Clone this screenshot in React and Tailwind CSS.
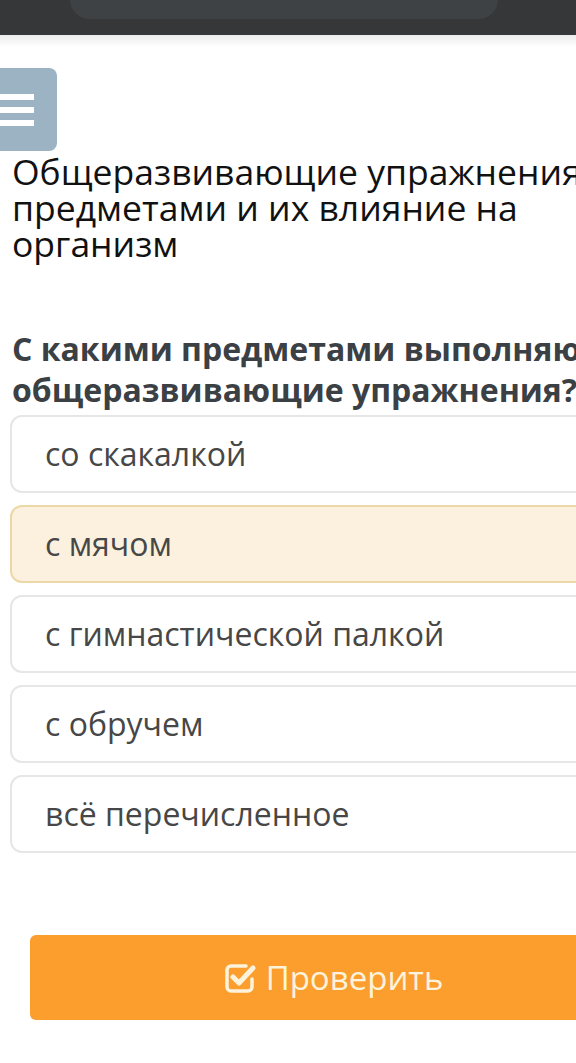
export default function App() {
  const options = [
    { t: "со скакалкой", sel: false },
    { t: "с мячом", sel: true },
    { t: "с гимнастической палкой", sel: false },
    { t: "с обручем", sel: false },
    { t: "всё перечисленное", sel: false },
  ];
  return (
    <div className="w-[576px] h-[1063px] overflow-hidden bg-white" style={{ fontFamily: '"Open Sans", "Noto Sans", sans-serif' }}>
      <div className="w-[668px]">
        {/* top bar */}
        <div className="h-[35px] bg-[#363739] relative">
          <div className="absolute left-[70px] top-[-20px] w-[428px] h-[39px] rounded-[20px] bg-[#3e4244]" />
        </div>
        <div className="h-[12px] bg-gradient-to-b from-[#ececec] to-white" />
        {/* menu button */}
        <div className="mt-[21px] flex">
          <div className="w-[57px] h-[83px] bg-[#9cb3c3] rounded-r-[8px] flex flex-col justify-center gap-[7px] items-end pr-[23px]">
            <div className="w-[34px] h-[6px] bg-white" />
            <div className="w-[34px] h-[6px] bg-white" />
            <div className="w-[34px] h-[6px] bg-white" />
          </div>
        </div>
        <div className="px-[10px]">
          <h1 className="mt-[2px] pl-[2px] text-[35.5px] leading-[36px] text-[#111111] font-normal">
            Общеразвивающие упражнения с предметами и их влияние на организм
          </h1>
          <div className="mt-[67px] pl-[2px] text-[32px] leading-[41px] font-bold text-[#3b4045]">
            С какими предметами выполняются общеразвивающие упражнения?
          </div>
          <div className="mt-[5px] flex flex-col gap-[12px]">
            {options.map((o) => (
              <div
                key={o.t}
                className={
                  o.sel
                    ? "h-[78px] rounded-[12px] border-2 border-[#ecd7a6] bg-[#fbf1de] flex items-center pl-[33px] text-[32px] text-[#474747]"
                    : "h-[78px] rounded-[12px] border-2 border-[#e6e6e6] bg-white flex items-center pl-[33px] text-[32px] text-[#474747]"
                }
              >
                {o.t}
              </div>
            ))}
          </div>
          <div className="mt-[82px] mx-[20px] h-[85px] rounded-[6px] bg-[#fb9e2d] flex items-center justify-center gap-[10px] text-[33px] text-[#fdf3dc]">
            <svg width="31" height="30" viewBox="0 0 31 30" fill="none">
              <path d="M21 3H6a4 4 0 0 0-4 4v17a4 4 0 0 0 4 4h17a4 4 0 0 0 4-4v-8" stroke="#fdf3dc" strokeWidth="3.5" strokeLinecap="round" />
              <path d="M8 14l6 6L28 5" stroke="#fdf3dc" strokeWidth="5" strokeLinecap="round" strokeLinejoin="round" />
            </svg>
            <span>Проверить</span>
          </div>
        </div>
      </div>
    </div>
  );
}
